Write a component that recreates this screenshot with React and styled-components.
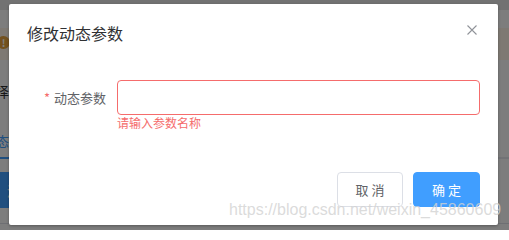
import React from 'react'
import styled, { createGlobalStyle } from 'styled-components'

const GlobalStyle = createGlobalStyle`
  html, body {
    margin: 0;
    padding: 0;
    background: #fff;
  }
  body {
    font-family: "Liberation Sans", "Noto Sans CJK SC", sans-serif;
  }
`

const Screen = styled.div`
  position: relative;
  width: 509px;
  height: 230px;
  overflow: hidden;
`

// page that sits behind the modal mask
const Page = styled.div`
  display: flex;
  flex-direction: column;
  height: 100%;
  background: #fbfbfb;
  font-family: "Noto Sans CJK SC", sans-serif;
`

const TopBar = styled.div`
  height: 10px;
  background: #e4e4e4;
`

const Gap = styled.div`
  height: ${(p) => p.h}px;
`

const Alert = styled.div`
  height: 32px;
  display: flex;
  align-items: center;
  background: #fdf3e6;
`

const AlertIcon = styled.span`
  width: 13px;
  height: 13px;
  margin: -3px 0 0 -3px;
  border-radius: 50%;
  background: #e6a23c;
  color: #fff;
  font-size: 10px;
  font-weight: bold;
  line-height: 13px;
  text-align: center;
`

const PageLabel = styled.div`
  height: 22px;
  margin-left: -5px;
  font-size: 14px;
  line-height: 22px;
  color: #303133;
`

const TabRow = styled.div`
  height: 30px;
  box-sizing: border-box;
  padding-top: 4px;
  margin-left: -4px;
  font-size: 13px;
  line-height: 19px;
  color: #409eff;
`

const TabLine = styled.div`
  height: 2px;
  background: linear-gradient(to right, #409eff 0 9px, #e4e7ed 9px);
`

const PageButton = styled.div`
  height: 36px;
  width: 60px;
  margin-left: -40px;
  display: flex;
  align-items: center;
  justify-content: flex-end;
  padding-right: 12px;
  background: #409eff;
  color: #fff;
  font-size: 13px;
`

const BottomLine = styled.div`
  height: 1px;
  background: #dcdfe6;
`

const Mask = styled.div`
  position: absolute;
  inset: 0;
  background: rgba(0, 0, 0, 0.5);
  padding: 4px 0 0 9px;
`

const Dialog = styled.div`
  width: 489px;
  height: 221px;
  background: #fff;
  border-radius: 2px;
  box-shadow: 0 1px 3px rgba(0, 0, 0, 0.3);
  display: flex;
  flex-direction: column;
  font-family: "Noto Sans CJK SC", sans-serif;
`

const Header = styled.div`
  display: flex;
  justify-content: space-between;
  align-items: flex-start;
  padding: 18px 18px 9px;
`

const Title = styled.span`
  font-size: 16px;
  line-height: 22px;
  color: #303133;
`

const CloseButton = styled.button`
  margin: 3px 3px 0 0;
  padding: 0;
  border: none;
  background: transparent;
  width: 10px;
  height: 10px;
  display: flex;
  cursor: pointer;
`

const Body = styled.div`
  padding: 27px 18px 34px;
`

const FormItem = styled.div`
  display: flex;
  align-items: flex-start;
`

const Label = styled.label`
  width: 90px;
  flex-shrink: 0;
  box-sizing: border-box;
  padding-right: 11px;
  text-align: right;
  font-size: 13px;
  line-height: 35px;
  color: #606266;
`

const Star = styled.span`
  color: #f56c6c;
  margin-right: 4px;
`

const Field = styled.div`
  flex: 1;
  display: flex;
  flex-direction: column;
`

const Input = styled.input`
  height: 35px;
  box-sizing: border-box;
  border: 1px solid #f56c6c;
  border-radius: 4px;
  padding: 0 13px;
  font-size: 13px;
  outline: none;
`

const Error = styled.div`
  margin-top: 2px;
  font-size: 12px;
  line-height: 12px;
  color: #f56c6c;
`

const Footer = styled.div`
  display: flex;
  justify-content: flex-end;
  gap: 10px;
  padding: 9px 18px 18px;
`

const Button = styled.button`
  height: 35px;
  width: ${(p) => p.w}px;
  box-sizing: border-box;
  border-radius: 4px;
  border: 1px solid ${(p) => (p.primary ? '#409eff' : '#dcdfe6')};
  background: ${(p) => (p.primary ? '#409eff' : '#fff')};
  color: ${(p) => (p.primary ? '#fff' : '#606266')};
  font-family: "Noto Sans CJK SC", sans-serif;
  font-size: 13px;
  padding: 0;
  cursor: pointer;
`

const Watermark = styled.div`
  position: absolute;
  left: 229px;
  top: 201px;
  font-family: "Liberation Sans", sans-serif;
  font-size: 16px;
  line-height: 18px;
  color: rgba(210, 210, 210, 0.8);
  white-space: nowrap;
  pointer-events: none;
`

const CloseIcon = () => (
  <svg width="10" height="10" viewBox="0 0 10 10">
    <path d="M0.5 0.5 L9.5 9.5 M9.5 0.5 L0.5 9.5" stroke="#909399" strokeWidth="1.1" fill="none" />
  </svg>
)

export default function App() {
  return (
    <>
      <GlobalStyle />
      <Screen>
        <Page>
          <TopBar />
          <Gap h={18} />
          <Alert>
            <AlertIcon>!</AlertIcon>
          </Alert>
          <Gap h={20} />
          <PageLabel>择</PageLabel>
          <Gap h={25} />
          <TabRow>态参</TabRow>
          <TabLine />
          <Gap h={13} />
          <PageButton>添</PageButton>
          <Gap h={15} />
          <BottomLine />
        </Page>
        <Mask>
          <Dialog>
            <Header>
              <Title>修改动态参数</Title>
              <CloseButton aria-label="close">
                <CloseIcon />
              </CloseButton>
            </Header>
            <Body>
              <FormItem>
                <Label>
                  <Star>*</Star>动态参数
                </Label>
                <Field>
                  <Input />
                  <Error>请输入参数名称</Error>
                </Field>
              </FormItem>
            </Body>
            <Footer>
              <Button w={66}>取 消</Button>
              <Button w={67} primary>
                确 定
              </Button>
            </Footer>
          </Dialog>
        </Mask>
        <Watermark>https://blog.csdn.net/weixin_45860609</Watermark>
      </Screen>
    </>
  )
}
